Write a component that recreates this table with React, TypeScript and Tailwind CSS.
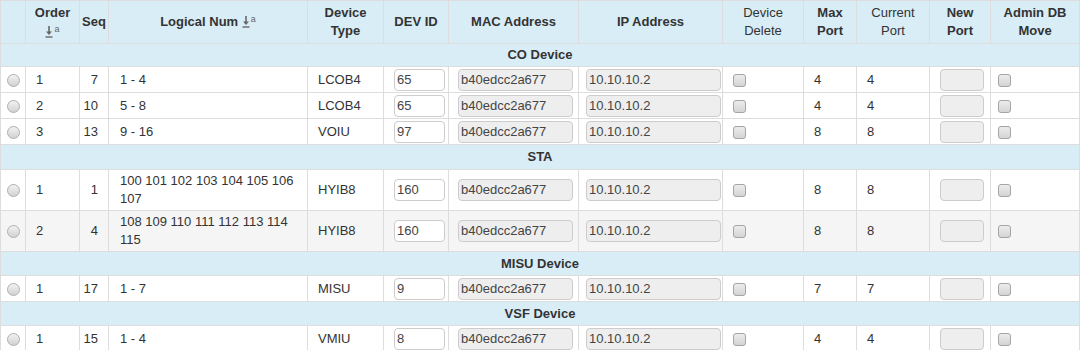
import React from "react";

type Row = {
  order: string;
  seq: string;
  logical: string;
  type: string;
  devId: string;
  max: string;
  cur: string;
  gray?: boolean;
  tall?: boolean;
};

type Group = { name: string; rows: Row[]; h: string };

const groups: Group[] = [
  {
    name: "CO Device",
    h: "h-[23px]",
    rows: [
      { order: "1", seq: "7", logical: "1 - 4", type: "LCOB4", devId: "65", max: "4", cur: "4" },
      { order: "2", seq: "10", logical: "5 - 8", type: "LCOB4", devId: "65", max: "4", cur: "4" },
      { order: "3", seq: "13", logical: "9 - 16", type: "VOIU", devId: "97", max: "8", cur: "8" },
    ],
  },
  {
    name: "STA",
    h: "h-[25px]",
    rows: [
      { order: "1", seq: "1", logical: "100 101 102 103 104 105 106 107", type: "HYIB8", devId: "160", max: "8", cur: "8", tall: true },
      { order: "2", seq: "4", logical: "108 109 110 111 112 113 114 115", type: "HYIB8", devId: "160", max: "8", cur: "8", tall: true, gray: true },
    ],
  },
  {
    name: "MISU Device",
    h: "h-[24px]",
    rows: [{ order: "1", seq: "17", logical: "1 - 7", type: "MISU", devId: "9", max: "7", cur: "7" }],
  },
  {
    name: "VSF Device",
    h: "h-[24px]",
    rows: [{ order: "1", seq: "15", logical: "1 - 4", type: "VMIU", devId: "8", max: "4", cur: "4" }],
  },
];

function SortIcon() {
  return (
    <span className="inline-flex items-start text-[#666] align-[-2px]">
      <svg width="8" height="13" viewBox="0 0 8 13" className="block">
        <path d="M4 1 V9" stroke="#666" strokeWidth="1.6" fill="none" />
        <path d="M1 6.5 L4 10 L7 6.5 Z" fill="#666" />
        <path d="M0.5 12 H7.5" stroke="#666" strokeWidth="1.4" />
      </svg>
      <span className="text-[9px] leading-[9px] ml-[1px] font-normal">a</span>
    </span>
  );
}

function Radio() {
  return (
    <span className="inline-block w-[13px] h-[13px] rounded-full border border-[#b0b0b0] bg-linear-to-b from-[#f2f2f2] to-[#d2d2d2] align-middle" />
  );
}

function Check() {
  return (
    <span className="inline-block w-[13px] h-[13px] rounded-[3px] border border-[#a5a5a5] bg-linear-to-b from-[#ececec] to-[#d4d4d4] align-middle" />
  );
}

function Input({ value, w, disabled }: { value: string; w: string; disabled?: boolean }) {
  return (
    <div
      className={`${w} h-[22px] rounded-[4px] border border-[#cccccc] px-[2px] text-[13px] leading-[20px] text-[#444] ${
        disabled ? "bg-[#eeeeee]" : "bg-white"
      }`}
    >
      {value}
    </div>
  );
}

const cell = "border border-[#dddddd] align-middle";

export default function App() {
  return (
    <div className="w-[1081px] h-[350px] overflow-hidden bg-white font-['Liberation_Sans',Arial,sans-serif]">
      <table className="table-fixed border-collapse w-[1079px] text-[13px] leading-[18px] text-[#333]">
        <colgroup>
          <col className="w-[25px]" />
          <col className="w-[54px]" />
          <col className="w-[29px]" />
          <col className="w-[199px]" />
          <col className="w-[76px]" />
          <col className="w-[65px]" />
          <col className="w-[130px]" />
          <col className="w-[144px]" />
          <col className="w-[81px]" />
          <col className="w-[53px]" />
          <col className="w-[73px]" />
          <col className="w-[61px]" />
          <col className="w-[89px]" />
        </colgroup>
        <thead>
          <tr className="bg-[#d9edf7] h-[43px] font-bold text-center">
            <th className={cell}></th>
            <th className={`${cell} px-1`}>
              <div>Order</div>
              <div className="h-[18px] flex justify-center items-center">
                <SortIcon />
              </div>
            </th>
            <th className={`${cell}`}>Seq</th>
            <th className={`${cell}`}>
              Logical Num <SortIcon />
            </th>
            <th className={`${cell} px-1`}>
              Device
              <br />
              Type
            </th>
            <th className={cell}>DEV ID</th>
            <th className={cell}>MAC Address</th>
            <th className={cell}>IP Address</th>
            <th className={`${cell} font-normal`}>
              Device
              <br />
              Delete
            </th>
            <th className={cell}>
              Max
              <br />
              Port
            </th>
            <th className={`${cell} font-normal`}>
              Current
              <br />
              Port
            </th>
            <th className={cell}>
              New
              <br />
              Port
            </th>
            <th className={cell}>
              Admin DB
              <br />
              Move
            </th>
          </tr>
        </thead>
        <tbody>
          {groups.map((g) => (
            <React.Fragment key={g.name}>
              <tr className={`bg-[#d9edf7] ${g.h}`}>
                <td colSpan={13} className={`${cell} text-center font-bold`}>
                  {g.name}
                </td>
              </tr>
              {g.rows.map((r, i) => (
                <tr key={i} className={`${r.gray ? "bg-[#f5f5f5]" : "bg-white"} ${r.tall ? "h-[41px]" : "h-[26px]"}`}>
                  <td className={`${cell} text-center pl-[1px]`}>
                    <Radio />
                  </td>
                  <td className={`${cell} pl-[10px]`}>{r.order}</td>
                  <td className={`${cell} text-right pr-[10px]`}>{r.seq}</td>
                  <td className={`${cell} pl-[11px] pr-[8px] py-[2px]`}>{r.logical}</td>
                  <td className={`${cell} pl-[10px]`}>{r.type}</td>
                  <td className={`${cell} pl-[10px]`}>
                    <Input value={r.devId} w="w-[51px]" />
                  </td>
                  <td className={`${cell} pl-[9px]`}>
                    <Input value="b40edcc2a677" w="w-[115px]" disabled />
                  </td>
                  <td className={`${cell} pl-[7px]`}>
                    <Input value="10.10.10.2" w="w-[135px]" disabled />
                  </td>
                  <td className={`${cell} pl-[10px]`}>
                    <Check />
                  </td>
                  <td className={`${cell} pl-[10px]`}>{r.max}</td>
                  <td className={`${cell} pl-[10px]`}>{r.cur}</td>
                  <td className={`${cell} pl-[10px]`}>
                    <Input value="" w="w-[44px]" disabled />
                  </td>
                  <td className={`${cell} pl-[7px]`}>
                    <Check />
                  </td>
                </tr>
              ))}
            </React.Fragment>
          ))}
        </tbody>
      </table>
    </div>
  );
}
